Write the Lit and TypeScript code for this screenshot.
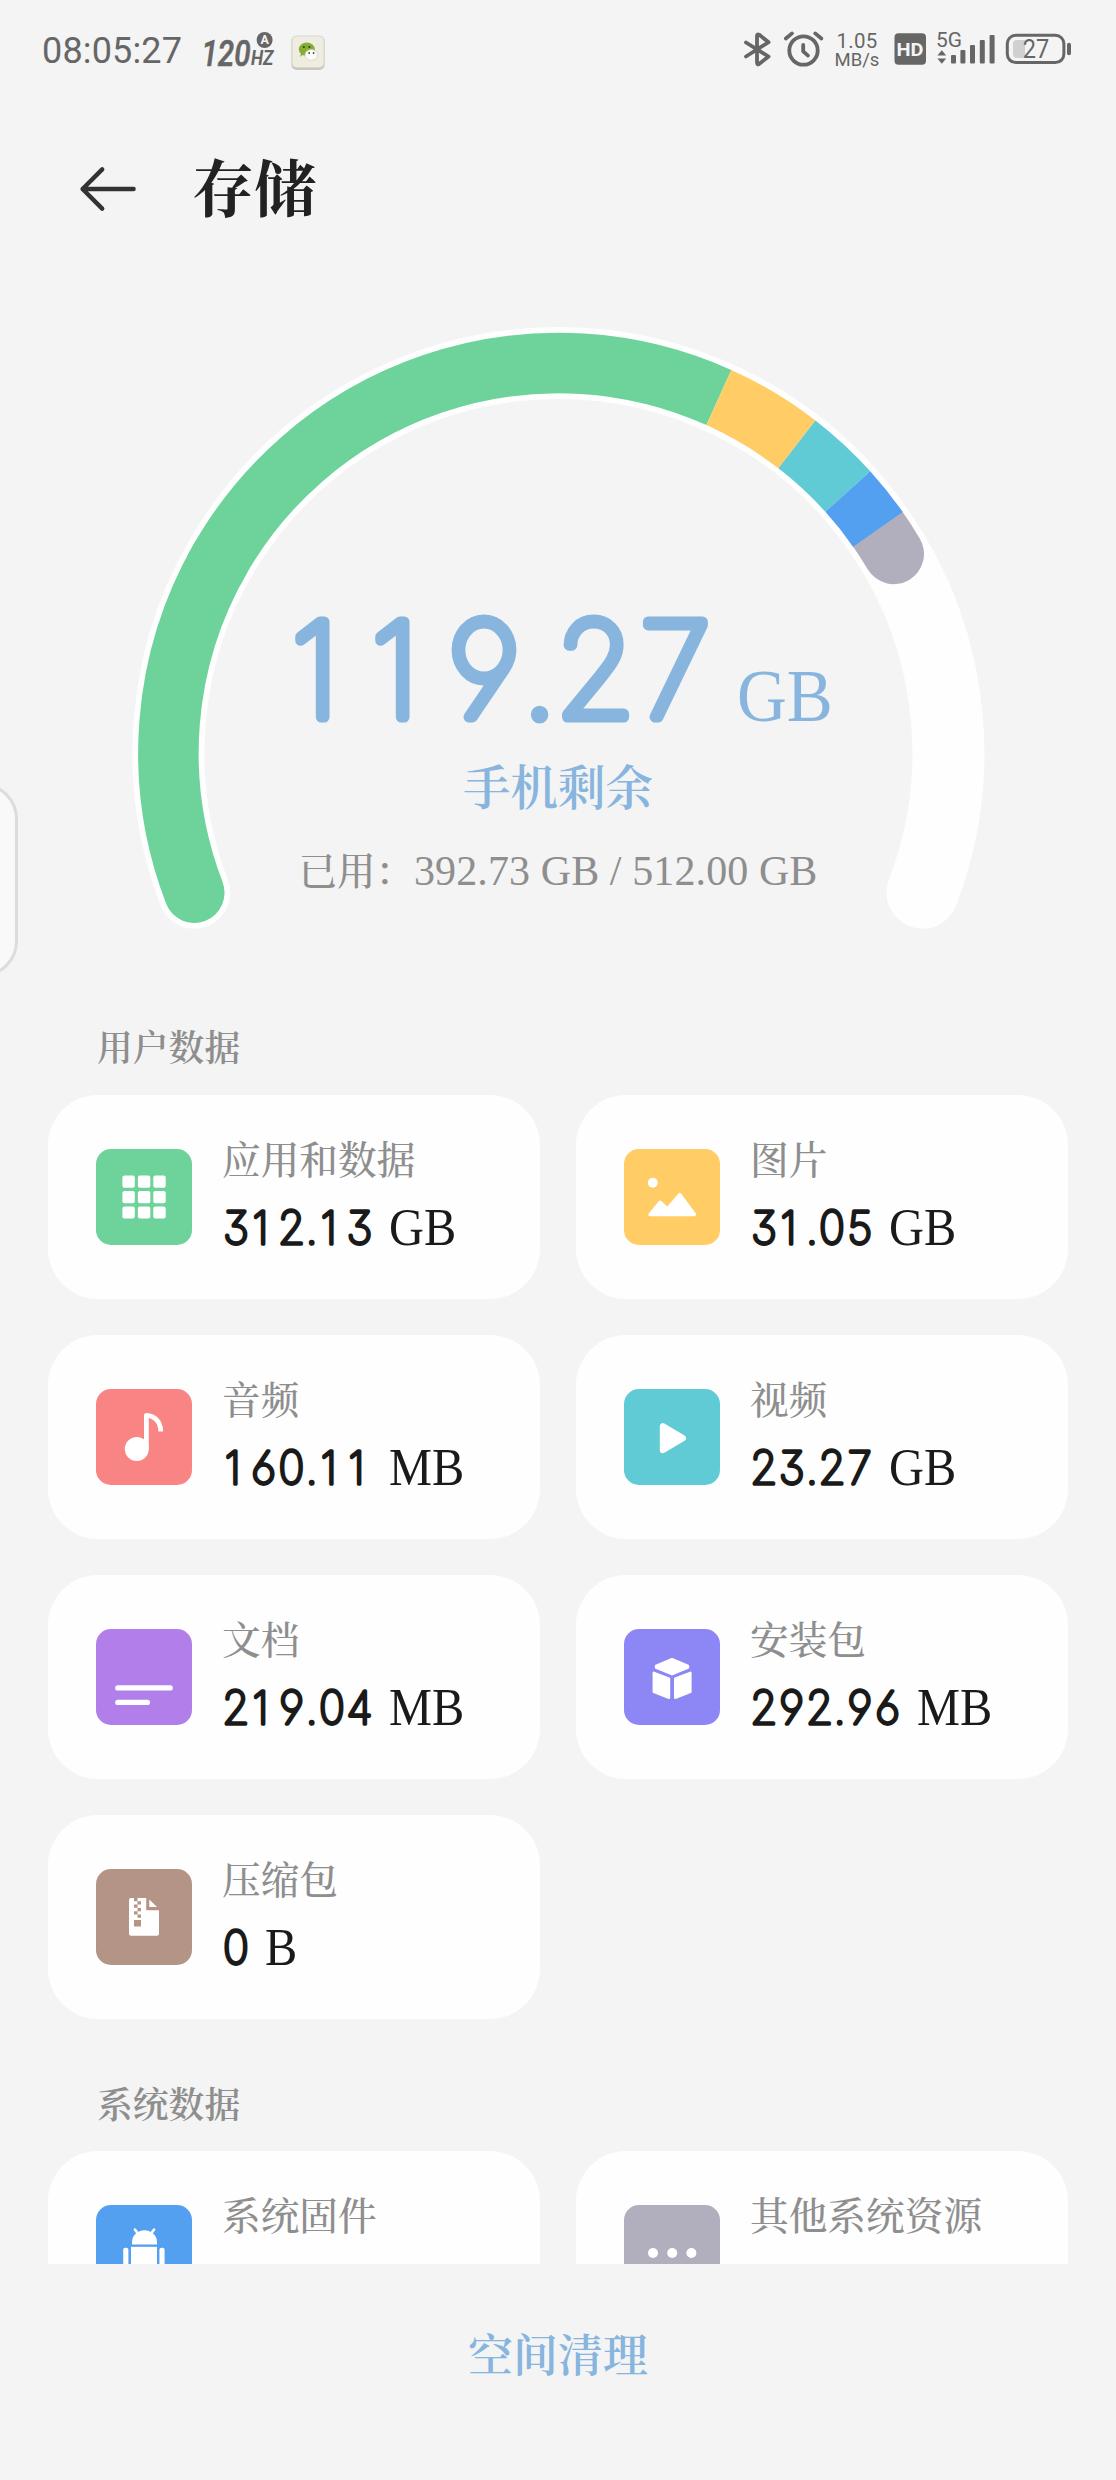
import { LitElement, html, svg, css, SVGTemplateResult } from "lit";
import { customElement, property } from "lit/decorators.js";

const SERIF_CJK = css`"Liberation Serif", "Noto Serif CJK SC", "Source Han Serif SC", "Noto Sans CJK SC", serif`;

/** Number set in rounded digits on a fixed pitch. */
@customElement("round-number")
export class RoundNumber extends LitElement {
  @property() value = "";
  @property({ type: Number }) size = 45.5;
  @property({ type: Number }) pitch = 27.8;
  @property({ type: Number }) dot = 12.5;
  @property({ type: Number }) stroke = 3.7;
  @property({ type: Number }) squeeze = 0.96;

  static styles = css`
    :host { display: block; }
    svg { display: block; overflow: visible; }
    text {
      font-family: Inter, Roboto, sans-serif;
      font-weight: 100;
      font-feature-settings: "cv03", "cv04", "cv09";
      text-anchor: middle;
      fill: currentColor;
      stroke: currentColor;
      stroke-linejoin: round;
      stroke-linecap: round;
    }
  `;

  render() {
    let x = 0;
    const centres: number[] = [];
    for (const ch of this.value) {
      const w = ch === "." ? this.dot : this.pitch;
      // The narrow "1" sits a little left of the middle of its cell.
      const nudge = ch === "1" ? -0.11 * this.pitch : 0;
      centres.push((x + w / 2 + nudge) / this.squeeze);
      x += w;
    }
    const h = Math.round(this.size * 0.74 + this.stroke);
    return html`<svg width=${x} height=${h}>
      <text
        transform="scale(${this.squeeze} 1)"
        x=${centres.map((c) => c.toFixed(2)).join(" ")}
        y=${h + 1 - this.stroke / 2}
        font-size=${this.size}
        stroke-width=${this.stroke}
      >${this.value}</text>
    </svg>`;
  }
}

const ICONS: Record<string, { color: string; art: SVGTemplateResult }> = {
  apps: {
    color: "#6dd39b",
    art: svg`${[26.5, 42, 57.4].map((y) =>
      [26.4, 41.9, 57.3].map((x) => svg`<rect x=${x} y=${y} width="12.4" height="12.2" rx="2"/>`)
    )}`,
  },
  image: {
    color: "#ffcc66",
    art: svg`<circle cx="28.8" cy="33.7" r="5"/>
      <path d="M26 65.5 36.2 53.2 43.4 60 55.7 45.6 70.5 65.5Z" stroke="#fff" stroke-width="3.4" stroke-linejoin="round"/>`,
  },
  music: {
    color: "#f98484",
    art: svg`<circle cx="40.8" cy="60" r="12"/>
      <path d="M50.4 60V26.4C58.6 26.6 64.7 33 64.7 42.6" fill="none" stroke="#fff" stroke-width="4.8" stroke-linejoin="round"/>`,
  },
  video: {
    color: "#60cbd5",
    art: svg`<path d="M38.8 37.2V61.2L59 49.2Z" stroke="#fff" stroke-width="6" stroke-linejoin="round"/>`,
  },
  doc: {
    color: "#b27fea",
    art: svg`<path d="M21.8 58.9H74.2M21.8 73.4H51.4" stroke="#fff" stroke-width="5.2" stroke-linecap="round"/>`,
  },
  apk: {
    color: "#8d87f6",
    art: svg`<g stroke="#fff" stroke-width="2.4" stroke-linejoin="round">
      <path d="M48 30 64 36.8V38.6L48 45.2 32 38.6V36.8Z"/>
      <path d="M29.8 43.8 45 49.6V68.8L29.8 63Z"/>
      <path d="M66.4 43.8 51.2 49.6V68.8L66.4 63Z"/></g>`,
  },
  zip: {
    color: "#b39487",
    art: svg`<path d="M35 29H50.2V41.2H63V64.8A2 2 0 0 1 61 66.8H35A2 2 0 0 1 33 64.8V31A2 2 0 0 1 35 29Z"/>
      <path d="M53.3 30.4 61 38H53.3Z"/>
      <path fill="#b39487" d="M38 29h3.5v3.2H38zM41.5 32.3H45v3.2h-3.5zM38 35.6h3.5v3.2H38zM41.5 39H45v3.2h-3.5zM38 42.3h3.5v3.2H38zM41.5 45.6H45v3.2h-3.5zM38 51h7v6.4h-7z"/>`,
  },
  android: {
    color: "#539ff0",
    art: svg`<path d="M36 39.6V37.2A12.5 12 0 0 1 61 37.2V39.6Z"/>
      <path d="M38.9 24.6 42.6 29.6M58.1 24.6 54.4 29.6" stroke="#fff" stroke-width="2.6" stroke-linecap="round"/>
      <path d="M35 41.8H61V70H35Z"/>
      <rect x="27.2" y="42.8" width="5.2" height="26" rx="2"/>
      <rect x="63.4" y="42.8" width="5.2" height="26" rx="2"/>`,
  },
  more: {
    color: "#b1afbe",
    art: svg`<circle cx="29" cy="48" r="5"/><circle cx="48.2" cy="48" r="5"/><circle cx="67.4" cy="48" r="5"/>`,
  },
};

@customElement("storage-card")
export class StorageCard extends LitElement {
  @property() icon = "apps";
  @property() label = "";
  @property() amount = "";
  @property() unit = "";

  static styles = css`
    :host {
      display: flex;
      gap: 30px;
      height: 204px;
      padding: 0 48px;
      box-sizing: border-box;
      border-radius: 50px;
      background: #fefefe;
      font-family: ${SERIF_CJK};
    }
    .icon { display: block; flex: none; margin-top: 54px; }
    .body { display: flex; flex-direction: column; padding-top: 42px; }
    .label { font-size: 38.7px; line-height: 48px; font-weight: 500; color: #8e8e8e; white-space: nowrap; }
    .value {
      display: flex;
      align-items: baseline;
      gap: 15px;
      margin-top: 13px;
      line-height: 60px;
      height: 60px;
      color: #1a1a1a;
    }
    .unit { font-size: 52px; transform: scaleX(0.93); transform-origin: left; }
  `;

  render() {
    const icon = ICONS[this.icon];
    return html`
      <svg class="icon" width="96" height="96" viewBox="0 0 96 96" fill="#fff">
        <rect width="96" height="96" rx="15" fill=${icon.color} />
        ${icon.art}
      </svg>
      <div class="body">
        <div class="label">${this.label}</div>
        ${this.amount
          ? html`<div class="value">
              <round-number .value=${this.amount}></round-number>
              <span class="unit">${this.unit}</span>
            </div>`
          : null}
      </div>
    `;
  }
}

@customElement("status-bar")
export class StatusBar extends LitElement {
  static styles = css`
    :host {
      display: flex;
      align-items: center;
      justify-content: space-between;
      height: 102px;
      padding: 0 44px 0 42px;
      color: #666;
      font-family: Roboto, sans-serif;
    }
    .side { display: flex; align-items: center; }
    .clock { font-size: 36px; line-height: 40px; width: 160px; letter-spacing: 0.15px; white-space: nowrap; }
    svg { display: block; flex: none; overflow: visible; }
    .hz { font: italic 500 37px Roboto, sans-serif; }
    .small { font: italic 700 19.5px Roboto, sans-serif; }
    .badge { font: 700 12.5px Roboto, sans-serif; text-anchor: middle; }
    .rate {
      display: flex;
      flex-direction: column;
      align-items: center;
      width: 46px;
      margin: 0 13px 0 9px;
      font-size: 20px;
      line-height: 19px;
      white-space: nowrap;
    }
    .rate .num { font-size: 20.5px; letter-spacing: 0.2px; }
    .rate .per { font-size: 18.5px; }
    .hd { font: 700 19px Roboto, sans-serif; text-anchor: middle; }
    .net { font: 400 21px Roboto, sans-serif; }
    .batt { font: 400 26px Roboto, sans-serif; text-anchor: middle; }
  `;

  render() {
    return html`
      <div class="side">
        <span class="clock">08:05:27</span>
        <svg width="74" height="44" viewBox="202 29 74 44" fill="#666">
          <text class="hz" x="201.5" y="65.5" stroke="#666" stroke-width=".7" textLength="49" lengthAdjust="spacingAndGlyphs">120</text>
          <text class="small" x="251" y="64.8" textLength="22.5" lengthAdjust="spacingAndGlyphs">HZ</text>
          <circle cx="264.6" cy="40" r="8" />
          <text class="badge" x="264.6" y="44.4" fill="#f4f4f4">A</text>
        </svg>
        <svg width="66" height="40" viewBox="276 31 66 40">
          <rect x="291.5" y="36" width="33" height="34" rx="5" fill="#c9c7bd" />
          <rect x="292" y="36" width="32" height="31.5" rx="4.5" fill="#efede2" stroke="#d8d6cb" />
          <path d="M300 57l1.2-4.2h4z" fill="#84ae34" />
          <ellipse cx="306.8" cy="49.3" rx="8" ry="6.8" fill="#84ae34" />
          <circle cx="303.8" cy="47" r="1.1" fill="#34431a" />
          <circle cx="309.4" cy="47" r="1.1" fill="#34431a" />
          <ellipse cx="311.4" cy="55" rx="6.4" ry="5.4" fill="#fbfbf7" stroke="#cfcfc4" stroke-width=".7" />
          <circle cx="309.2" cy="53" r=".9" fill="#444" />
          <circle cx="313.6" cy="53" r=".9" fill="#444" />
        </svg>
      </div>
      <div class="side">
        <svg width="82" height="40" viewBox="743 31 82 40" fill="none" stroke="#666" stroke-linecap="round" stroke-linejoin="round">
          <path stroke-width="3.8" d="M746 42.5 768.6 56.5 759 64Q757 65 757 62.6V36Q757 33.6 759 34.6L768.6 42.2 746 56.5" />
          <circle cx="803.5" cy="50.5" r="14.2" stroke-width="3.8" />
          <path stroke-width="3.8" d="M785.8 38.5 792 33.4M821.4 38.5 815.2 33.4M803.2 45V51.4L808 55.6" />
        </svg>
        <div class="rate"><span class="num">1.05</span><span class="per">MB/s</span></div>
        <svg width="179" height="40" viewBox="893 31 179 40" fill="#666">
          <rect x="894.5" y="33.2" width="31.5" height="31.5" rx="4" />
          <text class="hd" x="910" y="56" fill="#f4f4f4" textLength="27" lengthAdjust="spacingAndGlyphs">HD</text>
          <text class="net" x="936" y="46.8" textLength="26" lengthAdjust="spacingAndGlyphs">5G</text>
          <path d="M937.4 55.4 941.8 50.2 946.2 55.4ZM937.4 58.6 941.8 63.8 946.2 58.6Z" />
          <rect x="951" y="55" width="5" height="8.6" rx="1" />
          <rect x="960.4" y="50" width="5" height="13.6" rx="1" />
          <rect x="970" y="45" width="5" height="18.6" rx="1" />
          <rect x="979.8" y="40" width="5" height="23.6" rx="1" />
          <rect x="989.6" y="35" width="5" height="28.6" rx="1" />
          <rect x="1007.3" y="35.2" width="56.6" height="27.4" rx="8.5" fill="none" stroke="#666" stroke-width="3" />
          <path d="M1017 40H1025V58H1017Q1013 58 1013 54V44Q1013 40 1017 40Z" fill="#d0d0d0" />
          <rect x="1067" y="42.8" width="4" height="12.4" rx="2" />
          <text class="batt" x="1036" y="58.4" textLength="26.5" lengthAdjust="spacingAndGlyphs">27</text>
        </svg>
      </div>
    `;
  }
}

@customElement("storage-gauge")
export class StorageGauge extends LitElement {
  static styles = css`
    :host { display: grid; height: 628px; font-family: ${SERIF_CJK}; }
    .dial, .readout { grid-area: 1 / 1; }
    .dial { display: block; }
    .readout { display: flex; flex-direction: column; align-items: center; z-index: 1; }
    .free {
      display: flex;
      align-items: baseline;
      gap: 21px;
      height: 130px;
      margin-top: 311px;
      line-height: 130px;
      color: #88b5de;
    }
    .unit { font-size: 75px; margin-right: -9px; transform: scaleX(0.92); transform-origin: left; }
    .caption { margin-top: 18px; font-size: 47.5px; line-height: 56px; font-weight: 600; color: #88b5de; }
    .used { margin-top: 29px; font-size: 38.5px; line-height: 50px; font-weight: 500; color: #8e8e8e; white-space: nowrap; }
    .used .sizes { font-size: 42px; font-weight: 400; letter-spacing: 0.1px; }
  `;

  private static readonly CX = 558.4;
  private static readonly CY = 451;
  private static readonly R = 390;

  private arc(from: number, to: number, color: string, width: number, cap = "butt") {
    const { CX, CY, R } = StorageGauge;
    const at = (deg: number) => {
      const a = (deg * Math.PI) / 180;
      return `${(CX + R * Math.sin(a)).toFixed(2)} ${(CY - R * Math.cos(a)).toFixed(2)}`;
    };
    const large = to - from > 180 ? 1 : 0;
    return svg`<path d="M${at(from)}A${R} ${R} 0 ${large} 1 ${at(to)}" fill="none"
      stroke=${color} stroke-width=${width} stroke-linecap=${cap} />`;
  }

  render() {
    return html`
      <svg class="dial" width="1116" height="640" viewBox="0 0 1116 640">
        ${this.arc(-111, 111, "#fefefe", 72, "round")}
        ${this.arc(54, 59.3, "#b1afbe", 60.5, "round")}
        ${this.arc(-111, -60, "#6dd39b", 60.5, "round")}
        ${this.arc(-62, 24.3, "#6dd39b", 60.5)}
        ${this.arc(24.3, 37.7, "#ffcc66", 60.5)}
        ${this.arc(37.7, 47.9, "#60cbd5", 60.5)}
        ${this.arc(47.9, 55, "#539ff0", 60.5)}
      </svg>
      <div class="readout">
        <div class="free">
          <round-number value="119.27" size="131" pitch="80" dot="31.4" stroke="11" squeeze="0.98"></round-number>
          <span class="unit">GB</span>
        </div>
        <div class="caption">手机剩余</div>
        <div class="used">已用：<span class="sizes">392.73 GB / 512.00 GB</span></div>
      </div>
    `;
  }
}

const USER_DATA = [
  ["apps", "应用和数据", "312.13", "GB"],
  ["image", "图片", "31.05", "GB"],
  ["music", "音频", "160.11", "MB"],
  ["video", "视频", "23.27", "GB"],
  ["doc", "文档", "219.04", "MB"],
  ["apk", "安装包", "292.96", "MB"],
  ["zip", "压缩包", "0", "B"],
];

const SYSTEM_DATA = [
  ["android", "系统固件", "", ""],
  ["more", "其他系统资源", "", ""],
];

@customElement("app-root")
export class AppRoot extends LitElement {
  static styles = css`
    :host {
      display: flex;
      flex-direction: column;
      position: relative;
      width: 1116px;
      height: 2480px;
      overflow: hidden;
      background: #f4f4f4;
      font-family: ${SERIF_CJK};
    }
    .head { display: flex; align-items: center; gap: 55px; height: 174px; padding-left: 79px; }
    .back { display: block; }
    .title { margin: 0; padding-top: 3px; font-size: 62px; line-height: 80px; font-weight: 700; color: #222; }
    .scroll { height: 1962px; overflow: hidden; flex: none; margin-top: 26px; }
    .head, .bar, .foot { flex: none; }
    .section {
      margin: 0;
      padding-left: 97px;
      font-size: 35.8px;
      line-height: 48px;
      font-weight: 600;
      color: #8e8e8e;
    }
    .first { padding-top: 95px; }
    .second { padding-top: 63px; }
    .grid {
      display: grid;
      grid-template-columns: 492px 492px;
      gap: 36px;
      padding: 22px 48px 0;
    }
    .second + .grid { padding-top: 21px; }
    .foot {
      flex: 1;
      display: flex;
      justify-content: center;
      padding-top: 63px;
      font-size: 45px;
      line-height: 60px;
      font-weight: 600;
      color: #88b5de;
    }
    .handle {
      position: absolute;
      left: -60px;
      top: 783px;
      width: 78px;
      height: 194px;
      box-sizing: border-box;
      border: 3px solid #dcdcdc;
      border-radius: 36px;
      background: #f9f9f9;
    }
  `;

  private cards(items: string[][]) {
    return items.map(
      ([icon, label, amount, unit]) =>
        html`<storage-card .icon=${icon} .label=${label} .amount=${amount} .unit=${unit}></storage-card>`
    );
  }

  render() {
    return html`
      <status-bar class="bar"></status-bar>
      <header class="head">
        <svg class="back" width="58" height="48" viewBox="0 0 58 48" fill="none" stroke="#333" stroke-width="4.4"
          stroke-linecap="round" stroke-linejoin="round">
          <path d="M54.6 24H3.6M23.2 4.4 3.6 24 23.2 43.6" />
        </svg>
        <h1 class="title">存储</h1>
      </header>
      <main class="scroll">
        <storage-gauge></storage-gauge>
        <h2 class="section first">用户数据</h2>
        <div class="grid">${this.cards(USER_DATA)}</div>
        <h2 class="section second">系统数据</h2>
        <div class="grid">${this.cards(SYSTEM_DATA)}</div>
      </main>
      <footer class="foot">空间清理</footer>
      <div class="handle"></div>
    `;
  }
}
